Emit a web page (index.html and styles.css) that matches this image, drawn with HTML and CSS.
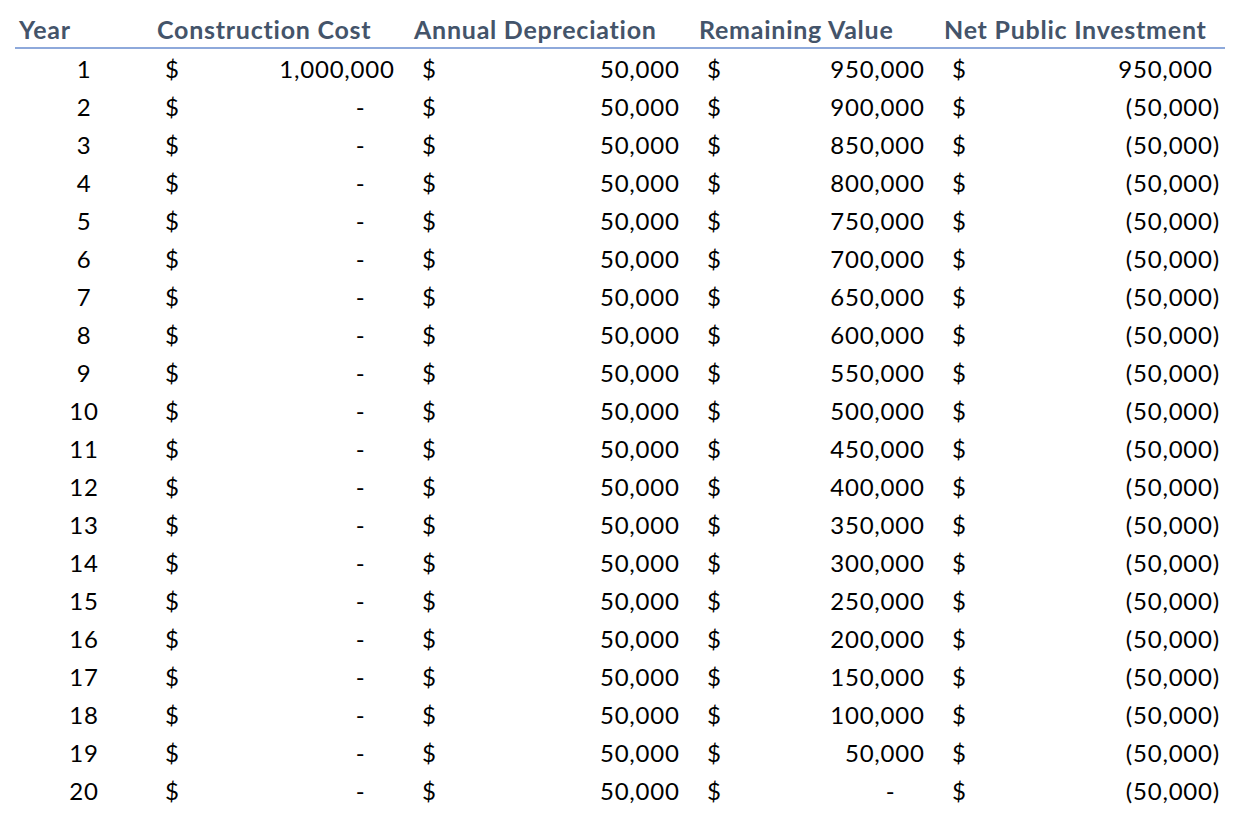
FILE: index.html
```html
<!DOCTYPE html>
<html>
<head>
<meta charset="utf-8">
<link rel="stylesheet" href="styles.css">
</head>
<body>
<table class="sheet">
  <colgroup>
    <col class="c-year">
    <col class="c-cost">
    <col class="c-dep">
    <col class="c-rem">
    <col class="c-net">
  </colgroup>
  <thead>
    <tr>
      <th>Year</th>
      <th>Construction Cost</th>
      <th>Annual Depreciation</th>
      <th>Remaining Value</th>
      <th>Net Public Investment</th>
    </tr>
  </thead>
  <tbody id="rows"></tbody>
</table>
<script src="script.js"></script>
</body>
</html>
```

FILE: styles.css
```css
html, body {
  margin: 0;
  padding: 0;
  background: #ffffff;
}

body {
  padding-left: 15px;
  font-family: "Lato", "Liberation Sans", sans-serif;
  color: #000000;
}

.sheet {
  border-collapse: collapse;
  table-layout: fixed;
  width: 1210px;
}

.c-year { width: 138px; }
.c-cost { width: 257px; }
.c-dep  { width: 285px; }
.c-rem  { width: 245px; }
.c-net  { width: 285px; }

.sheet th {
  height: 48px;
  padding: 0 0 3px 4px;
  box-sizing: border-box;
  vertical-align: bottom;
  text-align: left;
  font-size: 25px;
  line-height: 29px;
  font-weight: 700;
  letter-spacing: 0.75px;
  color: #44546a;
  border-bottom: 2px solid #8ea9db;
  white-space: nowrap;
}

.sheet td {
  height: 38px;
  box-sizing: border-box;
  padding: 2px 0 0 0;
  font-size: 24px;
  line-height: 36px;
  letter-spacing: 0.8px;
  vertical-align: middle;
  white-space: nowrap;
}

.sheet td.yr {
  text-align: center;
}

.sheet td.money {
  padding: 2px 8px 0 12px;
}

.sheet td.money.last {
  padding-right: 5px;
}

.money-in {
  display: flex;
  justify-content: space-between;
}

.ghost {
  visibility: hidden;
}
```

FILE: script.js
```js
(function () {
  var tbody = document.getElementById('rows');
  function fmt(n) {
    return n.toString().replace(/\B(?=(\d{3})+(?!\d))/g, ',');
  }
  function cell(v, last) {
    var inner;
    if (v === 0) {
      inner = '-<span class="ghost">00)</span>';
    } else if (v < 0) {
      inner = '(' + fmt(-v) + ')';
    } else {
      inner = fmt(v) + '<span class="ghost">)</span>';
    }
    return '<td class="money' + (last ? ' last' : '') + '"><div class="money-in"><span>$</span><span>' + inner + '</span></div></td>';
  }
  var html = '';
  for (var y = 1; y <= 20; y++) {
    var cost = y === 1 ? 1000000 : 0;
    var dep = 50000;
    var rem = 1000000 - 50000 * y;
    var net = y === 1 ? 950000 : -50000;
    html += '<tr><td class="yr">' + y + '</td>' + cell(cost) + cell(dep) + cell(rem) + cell(net, true) + '</tr>';
  }
  tbody.innerHTML = html;
})();
```
